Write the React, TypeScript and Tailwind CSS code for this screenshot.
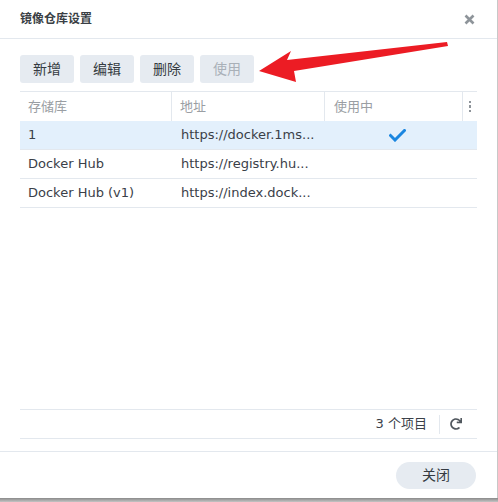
import { FaRedo } from "react-icons/fa";

const font = { fontFamily: '"DejaVu Sans", "Noto Sans CJK SC", sans-serif' };

const registries = [
  { name: "1", url: "https://docker.1ms...", active: true },
  { name: "Docker Hub", url: "https://registry.hu...", active: false },
  { name: "Docker Hub (v1)", url: "https://index.dock...", active: false },
];

const ToolButton = ({ label, disabled }: { label: string; disabled?: boolean }) => (
  <button
    className={`h-[28px] w-[54px] rounded-[3px] bg-[#e6ebf1] text-[14px] ${
      disabled ? "text-[#a9b0b8]" : "text-[#353b41]"
    }`}
  >
    {label}
  </button>
);

const Check = () => (
  <svg width="17" height="13" viewBox="0 0 17 13">
    <path d="M1.5 6.5 L6 11 L15.5 1.5" fill="none" stroke="#1a86e0" strokeWidth="3" strokeLinecap="square" />
  </svg>
);

export default function App() {
  return (
    <div className="relative flex h-[502px] w-[498px] flex-col bg-[#c8c8c8]" style={font}>
      <div className="flex h-[498px] w-[497px] flex-col bg-white">
        {/* title bar */}
        <div className="flex h-[39px] shrink-0 items-center justify-between border-b border-[#e3e8ee] pl-5 pr-[22px]">
          <span className="text-[12px] font-bold text-[#3a3f45]">镜像仓库设置</span>
          <svg width="11" height="11" viewBox="0 0 11 11">
            <path d="M1.5 1.5 L9.5 9.5 M9.5 1.5 L1.5 9.5" stroke="#8e949a" strokeWidth="2.6" />
          </svg>
        </div>

        {/* body */}
        <div className="flex flex-1 flex-col px-5 pt-4 pb-[12px]">
          <div className="flex gap-1.5">
            <ToolButton label="新增" />
            <ToolButton label="编辑" />
            <ToolButton label="删除" />
            <ToolButton label="使用" disabled />
          </div>

          <div className="mt-2 flex flex-1 flex-col border-t border-[#e3e8ee]">
            <div className="flex h-[29px] text-[13px] text-[#9a9ea3]">
              <div className="flex w-[152px] items-center border-r border-[#e3e8ee] pl-2">存储库</div>
              <div className="flex w-[153px] items-center border-r border-[#e3e8ee] pl-2">地址</div>
              <div className="flex w-[138px] items-center border-r border-[#e3e8ee] pl-[9px]">使用中</div>
              <div className="flex flex-1 flex-col items-center justify-center gap-[2px]">
                <span className="h-[2.5px] w-[2.5px] bg-[#8e949a]" />
                <span className="h-[2.5px] w-[2.5px] bg-[#8e949a]" />
                <span className="h-[2.5px] w-[2.5px] bg-[#8e949a]" />
              </div>
            </div>

            {registries.map((r) => (
              <div
                key={r.name}
                className={`flex h-[29px] border-b border-[#e3e8ee] text-[13px] text-[#3a4048] ${
                  r.active ? "bg-[#e3f0fc]" : ""
                }`}
              >
                <div className="flex w-[152px] items-center pl-2">{r.name}</div>
                <div className="flex w-[153px] items-center overflow-hidden whitespace-nowrap pl-[9px]">{r.url}</div>
                <div className="flex w-[138px] items-center justify-center pl-[6px]">{r.active && <Check />}</div>
              </div>
            ))}

            <div className="flex-1" />

            {/* pager */}
            <div className="flex h-[30px] items-center justify-end border-y border-[#e3e8ee] pr-[15px] text-[13px] text-[#3a4048]">
              <span>3 个项目</span>
              <span className="ml-[12px] h-[19px] w-px bg-[#e3e8ee]" />
              <FaRedo className="ml-[10px] text-[12px] text-[#50575e]" />
            </div>
          </div>
        </div>

        {/* footer */}
        <div className="flex h-[47px] shrink-0 items-center justify-end border-t border-[#e3e8ee] pr-[21px]">
          <button className="h-[27px] w-[80px] rounded-full bg-[#e6ebf1] text-[14px] text-[#353b41]">关闭</button>
        </div>
      </div>
      <div className="h-[4px] w-full bg-gradient-to-b from-[#8a8a8a] to-[#c4c4c4]" />

      {/* annotation arrow */}
      <svg className="pointer-events-none absolute left-0 top-0" width="498" height="502">
        <polygon points="259,71 291,51 287,60 447,42 448,46 294,71 296,82" fill="#ec1c24" />
      </svg>
    </div>
  );
}
